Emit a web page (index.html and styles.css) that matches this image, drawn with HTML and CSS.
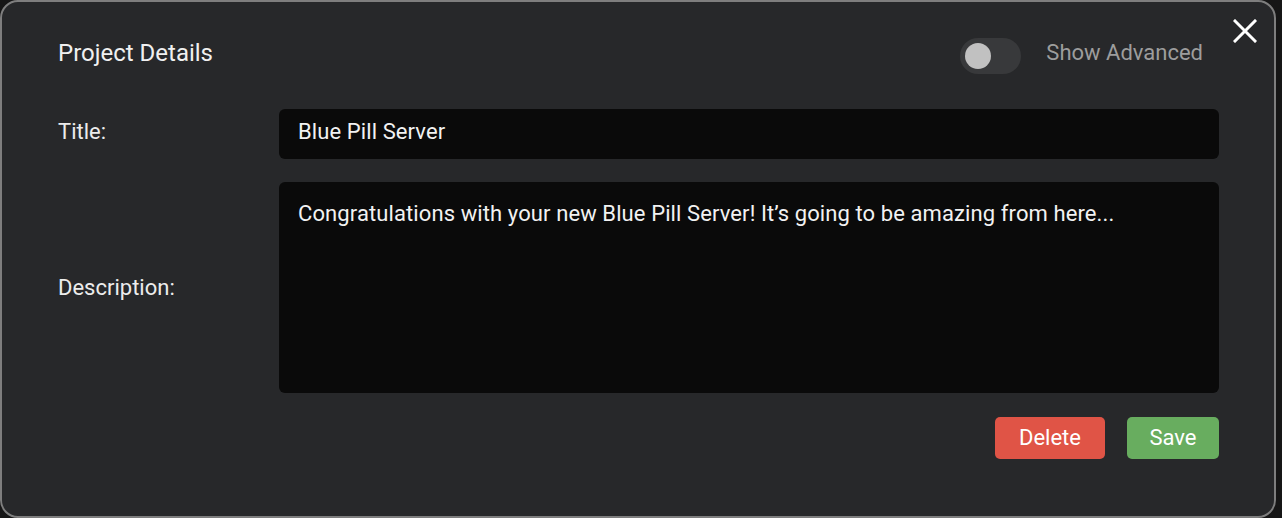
FILE: index.html
```html
<!DOCTYPE html>
<html>
<head>
<meta charset="utf-8">
<link rel="stylesheet" href="styles.css">
</head>
<body>
<div class="dialog">
  <button class="close" aria-label="Close">
    <svg width="24" height="24" viewBox="0 0 24 24"><path d="M2 2 L22 22 M22 2 L2 22" stroke="#fff" stroke-width="3" stroke-linecap="square" fill="none"/></svg>
  </button>
  <div class="header">
    <h1 class="heading">Project Details</h1>
    <div class="advanced">
      <span class="toggle"><span class="knob"></span></span>
      <span class="adv-label">Show Advanced</span>
    </div>
  </div>
  <div class="form">
    <label class="label">Title:</label>
    <div class="field field-title">Blue Pill Server</div>
    <label class="label label-desc">Description:</label>
    <div class="field field-desc">Congratulations with your new Blue Pill Server! It’s going to be amazing from here...</div>
  </div>
  <div class="actions">
    <button class="btn btn-delete">Delete</button>
    <button class="btn btn-save">Save</button>
  </div>
</div>
</body>
</html>
```
FILE: styles.css
```css
html, body {
  margin: 0;
  padding: 0;
  background: #161616;
}
body {
  font-family: Roboto, "Noto Sans", sans-serif;
  color: #ececec;
}
.dialog {
  position: relative;
  box-sizing: border-box;
  width: 1276px;
  height: 518px;
  border: 2px solid #7e7e7e;
  border-radius: 18px;
  background: #27282a;
  padding: 36px 55px 0 56px;
}
.close {
  position: absolute;
  top: 17px;
  right: 17px;
  width: 24px;
  height: 24px;
  padding: 0;
  border: 0;
  background: none;
  display: flex;
}
.header {
  display: flex;
  align-items: center;
  height: 36px;
}
.heading {
  margin: 0;
  padding-bottom: 7px;
  font-size: 24px;
  line-height: 28px;
  font-weight: 400;
  color: #f0f0f0;
  flex: 1;
}
.advanced {
  display: flex;
  align-items: center;
  margin-right: 16px;
}
.toggle {
  width: 61px;
  height: 36px;
  border-radius: 18px;
  background: #38393b;
  display: flex;
  align-items: center;
  padding-left: 5px;
  box-sizing: border-box;
}
.knob {
  width: 26px;
  height: 26px;
  border-radius: 50%;
  background: #c1c1c1;
}
.adv-label {
  margin-left: 25px;
  padding-bottom: 6px;
  font-size: 22px;
  line-height: 26px;
  color: #9d9d9d;
}
.form {
  margin-top: 35px;
  display: grid;
  grid-template-columns: 221px 940px;
  grid-template-rows: 50px 211px;
  row-gap: 23px;
}
.label {
  font-size: 22px;
  line-height: 26px;
  color: #ececec;
  align-self: center;
}
.label:first-child {
  padding-bottom: 4px;
}
.field {
  box-sizing: border-box;
  background: #0a0a0a;
  border-radius: 6px;
  padding: 0 19px;
  font-size: 22px;
  line-height: 26px;
  letter-spacing: 0.1px;
  color: #f2f2f2;
}
.field-title {
  display: flex;
  align-items: center;
  padding-bottom: 4px;
}
.field-desc {
  padding-top: 19px;
}
.actions {
  margin-top: 24px;
  display: flex;
  justify-content: flex-end;
  gap: 22px;
}
.btn {
  height: 42px;
  border: 0;
  border-radius: 5px;
  font-family: inherit;
  font-size: 22px;
  color: #fff;
  padding: 0 0 2px;
}
.btn-delete {
  width: 110px;
  background: #e05446;
}
.btn-save {
  width: 92px;
  background: #68ad5f;
}
```
